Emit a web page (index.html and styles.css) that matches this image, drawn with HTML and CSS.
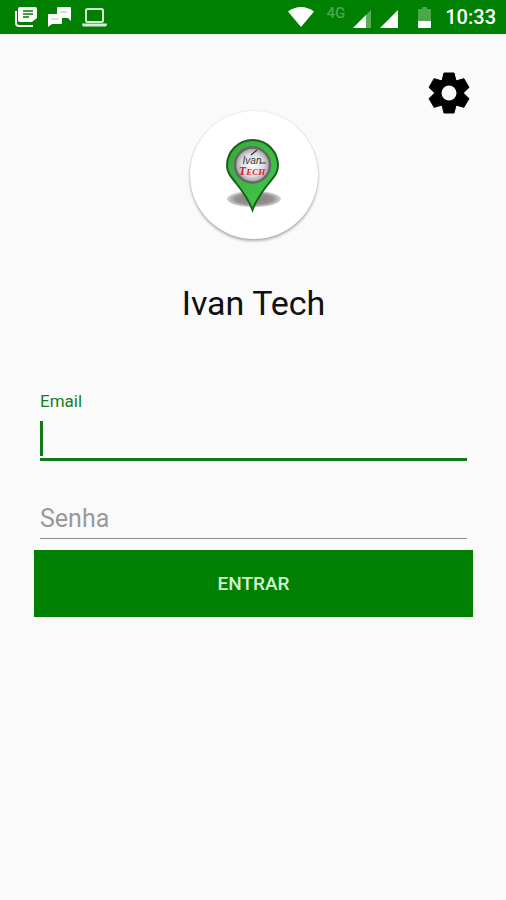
FILE: index.html
```html
<!DOCTYPE html>
<html lang="pt-BR">
<head>
<meta charset="utf-8">
<meta name="viewport" content="width=device-width, initial-scale=1">
<title>Ivan Tech</title>
<link rel="stylesheet" href="styles.css">
</head>
<body>
<header class="status-bar">
  <div class="notifications">
    <svg width="22" height="20" viewBox="0 0 22 20" aria-hidden="true">
      <path d="M1 4v12q0 3 3 3h14" fill="none" stroke="#fff" stroke-width="2"/>
      <path d="M5 0h15q2 0 2 2v9l-5 4H5q-2 0-2-2V2q0-2 2-2z" fill="#fff"/>
      <path d="M8 4h10M8 7h10M8 10h6" stroke="#008000" stroke-width="1.5"/>
    </svg>
    <svg width="23" height="20" viewBox="0 0 23 20" aria-hidden="true">
      <path d="M10 0h12q1 0 1 1v13l-3-3H9V1q0-1 1-1z" fill="#fff"/>
      <path d="M1 7h12q1 0 1 1v8q0 1-1 1H4l-4 3V8q0-1 1-1z" fill="#fff"/>
      <path d="M12 5h7M3 12h8" stroke="#9ccc9c" stroke-width="1"/>
    </svg>
    <svg width="25" height="20" viewBox="0 0 25 20" aria-hidden="true">
      <rect x="4" y="2" width="17" height="13" rx="1.5" fill="none" stroke="#d5ecd5" stroke-width="2"/>
      <path d="M0 16.500h25v1q0 2-2 2H2q-2 0-2-2z" fill="#d5ecd5"/>
    </svg>
  </div>
  <div class="indicators">
    <svg width="26" height="20" viewBox="0 0 26 20" aria-hidden="true">
      <path d="M0 4.500Q6 0 13 0t13 4.500L13 20z" fill="#fff"/>
    </svg>
    <span class="network">4G</span>
    <svg class="signal" width="18" height="18" viewBox="0 0 18 18" aria-hidden="true">
      <path d="M0 18L18 0v18z" fill="#fff" opacity=".35"/>
      <path d="M0 18L13 5v13z" fill="#fff"/>
    </svg>
    <svg class="signal" width="18" height="18" viewBox="0 0 18 18" aria-hidden="true">
      <path d="M0 18L18 0v18z" fill="#fff"/>
    </svg>
    <svg class="battery" width="13" height="21" viewBox="0 0 13 21" aria-hidden="true">
      <path d="M4 0h5v2h3q1 0 1 1v11H0V3q0-1 1-1h3z" fill="#4ca64c"/>
      <path d="M0 14h13v6q0 1-1 1H1q-1 0-1-1z" fill="#fff"/>
    </svg>
    <time>10:33</time>
  </div>
</header>
<main class="login">
  <div class="toolbar">
    <button class="settings" type="button" aria-label="Configurações">
      <svg width="48" height="48" viewBox="-24 -24 48 48" aria-hidden="true">
        <defs>
          <path id="teeth" d="M-7 -12L-5 -20H5L7 -12V12L5 20H-5L-7 12z" stroke="#000" stroke-linejoin="round"/>
        </defs>
        <circle r="14.500"/>
        <use href="#teeth"/>
        <use href="#teeth" transform="rotate(60)"/>
        <use href="#teeth" transform="rotate(120)"/>
        <circle r="7.500" fill="#fafafa"/>
      </svg>
    </button>
  </div>
  <div class="logo">
    <svg width="60" height="80" viewBox="0 0 60 80" role="img" aria-label="Ivan Tech">
      <defs>
        <linearGradient id="pin" x1="0" y1="0" x2="1" y2="1">
          <stop offset="0" stop-color="#38a83c"/>
          <stop offset="1" stop-color="#43cc49"/>
        </linearGradient>
        <radialGradient id="badge">
          <stop offset="0" stop-color="#fff"/>
          <stop offset=".65" stop-color="#dcdcdc"/>
          <stop offset="1" stop-color="#999"/>
        </radialGradient>
        <radialGradient id="shade">
          <stop offset="0" stop-color="#807b7b"/>
          <stop offset=".7" stop-color="#979292"/>
          <stop offset="1" stop-color="#d5d3d3"/>
        </radialGradient>
      </defs>
      <ellipse cx="30" cy="64" rx="27" ry="8" fill="url(#shade)"/>
      <path d="M28.500 75C25 65 20 58 12 48C6 41 3 37 3 30.500a25.500 25.500 0 0 1 51 0C54 37 51 41 45 48C37 58 32 65 28.500 75z" fill="url(#pin)" stroke="#17601c" stroke-width="2"/>
      <circle cx="28.500" cy="30" r="17.500" fill="url(#badge)" stroke="#686868" stroke-width="2.500"/>
      <path d="M27 20l6-5M36 28h6" stroke="#333" stroke-width="1.200"/>
      <text class="logo-top" x="28" y="29" text-anchor="middle">Ivan</text>
      <text class="logo-bottom" x="28" y="40" text-anchor="middle">T<tspan class="logo-small">ECH</tspan></text>
    </svg>
  </div>
  <h1>Ivan Tech</h1>
  <form class="form">
    <div class="field active">
      <label for="email">Email</label>
      <div class="entry">
        <input id="email" type="email">
        <span class="caret"></span>
      </div>
    </div>
    <div class="field">
      <input id="password" type="password" placeholder="Senha" aria-label="Senha">
    </div>
    <button class="submit" type="submit">ENTRAR</button>
  </form>
</main>
</body>
</html>
```

FILE: styles.css
```css
* {
  box-sizing: border-box;
}

body {
  margin: 0;
  min-height: 100vh;
  background: #fafafa;
  color: #111;
  font-family: Roboto, "Liberation Sans", sans-serif;
}

svg {
  display: block;
  flex: none;
}

.status-bar {
  display: flex;
  justify-content: space-between;
  align-items: center;
  height: 34px;
  padding: 0 10px 0 15px;
  background: #008000;
  color: #fff;
}

.notifications {
  display: flex;
  gap: 11px;
}

.indicators {
  display: flex;
  align-items: center;
}

.network {
  margin: 0 8px 0 13px;
  padding-bottom: 8px;
  color: #4ca64c;
  font-size: 15px;
  font-weight: 500;
  line-height: 16px;
}

.signal {
  margin-top: 3px;
  margin-right: 9px;
}

.battery {
  margin: 0 14px 0 11px;
}

time {
  font-size: 20px;
  font-weight: 500;
  line-height: 24px;
}

.login {
  padding: 35px 33px 0 34px;
}

.toolbar {
  display: flex;
  justify-content: flex-end;
}

.settings {
  padding: 0;
  border: 0;
  background: none;
}

.logo {
  display: flex;
  justify-content: center;
  align-items: center;
  width: 128px;
  height: 128px;
  margin: -6px auto 0;
  border-radius: 50%;
  background: #fff;
  box-shadow: 0 2px 3px rgba(0, 0, 0, 0.3), 0 0 2px rgba(0, 0, 0, 0.12);
}

.logo-top {
  fill: #333;
  font: italic 400 10px "Liberation Sans", sans-serif;
}

.logo-bottom {
  fill: #d8202c;
  font: italic 700 12px "Liberation Serif", serif;
}

.logo-small {
  font-size: 9px;
}

h1 {
  margin: 44px 0 0;
  font-size: 34px;
  font-weight: 400;
  line-height: 40px;
  text-align: center;
}

.form {
  display: flex;
  flex-direction: column;
  margin-top: 68px;
}

.field {
  margin: 0 6px;
}

.field label {
  display: block;
  color: #14801a;
  font-size: 17px;
  line-height: 20px;
}

.entry {
  position: relative;
  margin-bottom: 32px;
}

.field input {
  display: block;
  width: 100%;
  height: 46px;
  padding: 6px 0 0;
  border: 0;
  border-bottom: 1px solid #8c8c8c;
  border-radius: 0;
  outline: 0;
  background: transparent;
  color: #111;
  font: 400 25px Roboto, "Liberation Sans", sans-serif;
}

.field input::placeholder {
  color: #999;
  opacity: 1;
}

.field.active input {
  height: 50px;
  border-bottom: 3px solid #117a14;
}

.caret {
  position: absolute;
  top: 10px;
  left: 0;
  width: 3px;
  height: 35px;
  background: #117a14;
}

.submit {
  height: 67px;
  margin-top: 11px;
  border: 0;
  background: #008000;
  color: #d3f2d3;
  font: 500 19px Roboto, "Liberation Sans", sans-serif;
}
```
